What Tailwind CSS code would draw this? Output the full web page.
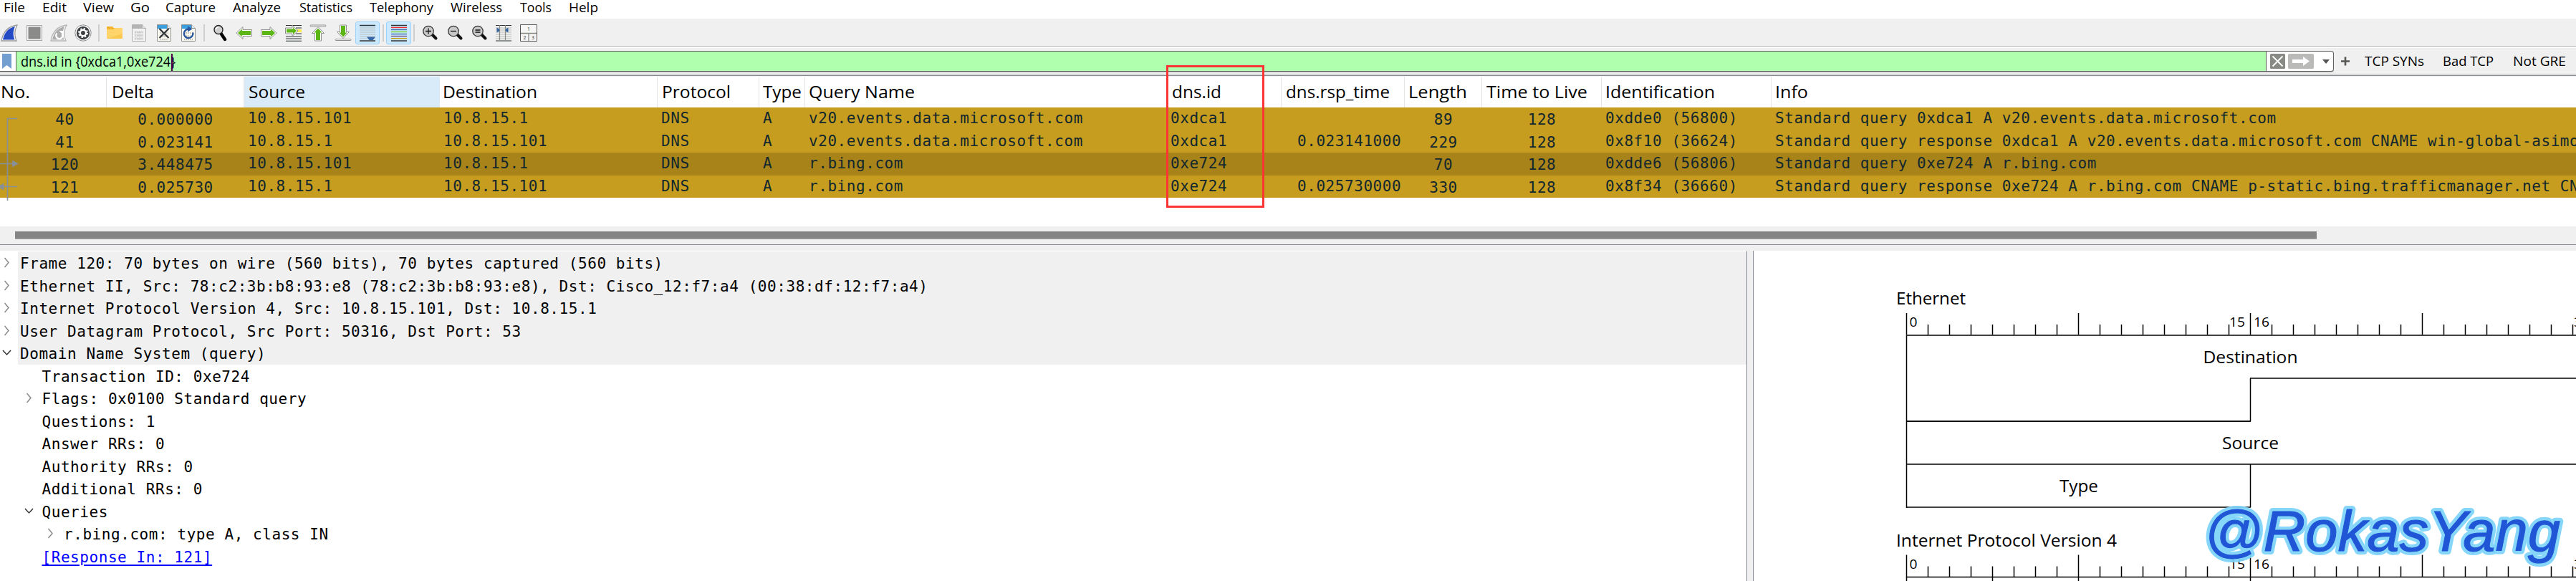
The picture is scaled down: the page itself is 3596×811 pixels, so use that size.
<!doctype html>
<html lang="en">
<head>
    <meta charset="UTF-8">
    <meta name="viewport" content="width=device-width, initial-scale=1.0">
    <script src="https://cdn.jsdelivr.net/npm/@tailwindcss/browser@4"></script>
    <title>dns.id in {0xdca1,0xe724}</title>
</head>
<body class="w-[3596px] h-[811px] overflow-hidden bg-[#f0f0f0] text-black font-['Open_Sans','Noto_Sans',sans-serif]">

<div class="relative flex flex-col w-[3596px] h-[811px] overflow-hidden">

    <!-- menu bar -->
    <nav id="menu" class="h-[26px] shrink-0 flex bg-white pl-[5px]"></nav>

    <!-- toolbar -->
    <div class="h-[39px] shrink-0 flex items-center border-t-2 border-[#f0f0f0] border-b border-b-[#b4b4b4] -ml-1">
        <div class="w-[34.4px] shrink-0 flex justify-center">
            <svg class="size-6" viewBox="0 0 24 24"><path d="M1 23C3 11 9 3 23 1C19 8 19 16 22 23Z" fill="#fff" stroke="#9a9a9a" stroke-width="1.3"/><path d="M3 21.500C5 12 10 5 20 3C17 9 17 16 19.500 21.500Z" fill="#2449c4"/></svg>
        </div>
        <div class="w-[34.4px] shrink-0 flex justify-center">
            <svg class="size-6" viewBox="0 0 24 24"><rect x="1.500" y="1.500" width="21" height="21" fill="#f4f4f4" stroke="#a8a8a8"/><rect x="3.500" y="3.500" width="17" height="17" fill="#8b8b89"/></svg>
        </div>
        <div class="w-[34.4px] shrink-0 flex justify-center">
            <svg class="size-6" viewBox="0 0 24 24"><path d="M1 23C3 11 9 3 23 1C19 8 19 16 22 23Z" fill="#fff" stroke="#b4b4b4" stroke-width="1.3"/><path d="M3 21.500C5 12 10 5 20 3C17 9 17 16 19.500 21.500Z" fill="#adadad"/><path d="M9.500 12.500a4.500 4.500 0 1 0 7 .500" fill="none" stroke="#fff" stroke-width="2.400"/><path d="M12.500 9h6v6z" fill="#fff"/></svg>
        </div>
        <div class="w-[34.4px] shrink-0 flex justify-center">
            <svg class="size-6" viewBox="0 0 24 24"><circle cx="12" cy="12" r="11.200" fill="#fff" stroke="#8c8c8c"/><circle cx="12" cy="12" r="9.200" fill="#3e4143"/><circle cx="12" cy="12" r="4.200" fill="none" stroke="#fff" stroke-width="2.400"/><circle cx="12" cy="12" r="6" fill="none" stroke="#fff" stroke-width="2" stroke-dasharray="2.200 2.512"/></svg>
        </div>
        <div class="w-[9.2px] shrink-0 flex justify-center"><i class="w-[2px] h-6 bg-[#cfcfcf]"></i></div>
        <div class="w-[34.4px] shrink-0 flex justify-center">
            <svg class="size-6" viewBox="0 0 24 24"><path d="M1 3h8l2 2h12v15H1z" fill="#f2b42c"/><path d="M1 7h9l2-2h11v15H1z" fill="#ffd46b"/><path d="M1 20h22v-7z" fill="#fbc94f"/></svg>
        </div>
        <div class="w-[34.4px] shrink-0 flex justify-center">
            <svg class="size-6" viewBox="0 0 24 24"><path d="M2.500.500h14l5 5v18h-19z" fill="#f3f3f3" stroke="#b0b0b0"/><path d="M3 1h13v5H3z" fill="#b4b4b4"/><path d="M16.500.500v5h5" fill="#e4e4e4" stroke="#b0b0b0"/><path d="M6 11h12M6 15.500h12M6 20h12" stroke="#bcbcbc" stroke-width="2.800" stroke-dasharray="1.500 1.200"/></svg>
        </div>
        <div class="w-[34.4px] shrink-0 flex justify-center">
            <svg class="size-6" viewBox="0 0 24 24"><path d="M2.500.500h14l5 5v18h-19z" fill="#fbfbf2" stroke="#909090"/><path d="M3 1h13v5H3z" fill="#3a9fdf"/><path d="M16.500.500v5h5" fill="#dcecf5" stroke="#909090"/><path d="M6 12h12M6 16.500h12M6 21h12" stroke="#c0c0b8" stroke-width="2.500" stroke-dasharray="1.500 1.200"/><path d="M5.500 6L18.500 19M18.500 6L5.500 19" stroke="#2e3436" stroke-width="2.200"/></svg>
        </div>
        <div class="w-[34.4px] shrink-0 flex justify-center">
            <svg class="size-6" viewBox="0 0 24 24"><path d="M2.500.500h14l5 5v18h-19z" fill="#fbfbf2" stroke="#909090"/><path d="M3 1h13v5H3z" fill="#3a9fdf"/><path d="M16.500.500v5h5" fill="#dcecf5" stroke="#909090"/><path d="M6 12h12M6 16.500h12M6 21h12" stroke="#c0c0b8" stroke-width="2.500" stroke-dasharray="1.500 1.200"/><path d="M18.300 11.500a6.300 6.300 0 1 1-6.300-5" fill="none" stroke="#2a56a0" stroke-width="2.400"/><path d="M11 2.500l6.500 4l-6.500 4z" fill="#2a56a0"/></svg>
        </div>
        <div class="w-[9.2px] shrink-0 flex justify-center"><i class="w-[2px] h-6 bg-[#cfcfcf]"></i></div>
        <div class="w-[34.4px] shrink-0 flex justify-center">
            <svg class="size-6" viewBox="0 0 24 24"><path d="M13 12l6 9" stroke="#000" stroke-width="4.400" stroke-linecap="round"/><circle cx="10" cy="7.500" r="6" fill="#cfcfcf" stroke="#222" stroke-width="1.400"/><path d="M6.500 7a3.500 3.500 0 0 1 3.500-3" stroke="#fff" stroke-width="1.500" fill="none"/></svg>
        </div>
        <div class="w-[34.4px] shrink-0 flex justify-center">
            <svg class="size-6" viewBox="0 0 24 24"><path d="M1 12L10 3.500V7.500H22.500V16.500H10V20.500Z" fill="#fff" stroke="#909090"/><path d="M3 12L8.800 6.500V9H21V15H8.800V17.500Z" fill="#5cb615"/></svg>
        </div>
        <div class="w-[34.4px] shrink-0 flex justify-center">
            <svg class="size-6" viewBox="0 0 24 24"><path d="M23 12L14 3.500V7.500H1.500V16.500H14V20.500Z" fill="#fff" stroke="#909090"/><path d="M21 12L15.200 6.500V9H3V15H15.200V17.500Z" fill="#5cb615"/></svg>
        </div>
        <div class="w-[34.4px] shrink-0 flex justify-center">
            <svg class="size-6" viewBox="0 0 24 24"><path d="M1 1.500h22M1 17h22M1 20h22M1 23.300h22M15 5h8M15 13h8" stroke="#2e3436" stroke-width="1.100"/><path d="M14 7h9v4h-9z" fill="#fce94f"/><path d="M18 9L10 1V5H.500V13H10V16.500Z" fill="#fff" stroke="#909090"/><path d="M16 9L11 4V6.500H2V11.500H11V14Z" fill="#5cb615"/></svg>
        </div>
        <div class="w-[34.4px] shrink-0 flex justify-center">
            <svg class="size-6" viewBox="0 0 24 24"><rect x="1" y="1" width="22" height="2" rx="1" fill="#fff" stroke="#909090"/><path d="M12 3.500L20.500 12.500H16.500V23H7.500V12.500H3.500Z" fill="#fff" stroke="#909090"/><path d="M12 5.500L17.500 11.500H15V22H9V11.500H6.500Z" fill="#5cb615"/></svg>
        </div>
        <div class="w-[34.4px] shrink-0 flex justify-center">
            <svg class="size-6" viewBox="0 0 24 24"><rect x="1" y="20.500" width="22" height="2" rx="1" fill="#fff" stroke="#909090"/><path d="M12 19.500L20.500 10.500H16.500V1H7.500V10.500H3.500Z" fill="#fff" stroke="#909090"/><path d="M12 17.500L17.500 11.500H15V2H9V11.500H6.500Z" fill="#5cb615"/></svg>
        </div>
        <div class="w-[34.4px] h-8 shrink-0 flex items-center justify-center bg-[#cce8ff] border border-[#99d1ff] rounded-[3px]">
            <svg class="size-6" viewBox="0 0 24 24"><path d="M1 1.500h22M1 23h22" stroke="#2e3436" stroke-width="1.300"/><path d="M1 5h22M1 8h22M1 11h22M1 14h22M1 17h22M1 20h22" stroke="#babdb6"/><path d="M11 17.500h12L19.500 22h-5z" fill="#3465a4"/></svg>
        </div>
        <div class="w-[9.2px] shrink-0 flex justify-center"><i class="w-[2px] h-6 bg-[#cfcfcf]"></i></div>
        <div class="w-[34.4px] h-8 shrink-0 flex items-center justify-center bg-[#cce8ff] border border-[#99d1ff] rounded-[3px]">
            <svg class="size-6" viewBox="0 0 24 24" stroke-width="1.300"><path d="M1 1.500h22M1 23h22" stroke="#2e3436"/><path d="M1 4.500h22" stroke="#ef2929"/><path d="M1 7.500h22" stroke="#3465a4"/><path d="M1 10.500h22" stroke="#73d216"/><path d="M1 13.500h22" stroke="#3465a4"/><path d="M1 16.500h22" stroke="#75507b"/><path d="M1 19.700h22" stroke="#c4a000"/></svg>
        </div>
        <div class="w-[9.2px] shrink-0 flex justify-center"><i class="w-[2px] h-6 bg-[#cfcfcf]"></i></div>
        <div class="w-[34.4px] shrink-0 flex justify-center">
            <svg class="size-6" viewBox="0 0 24 24"><path d="M15.500 14.500l5 5" stroke="#111" stroke-width="4" stroke-linecap="round"/><circle cx="10" cy="9.500" r="7.200" fill="#c9c9c9" stroke="#333" stroke-width="1.300"/><path d="M6 9.500h8M10 5.500v8" stroke="#111" stroke-width="1.300"/></svg>
        </div>
        <div class="w-[34.4px] shrink-0 flex justify-center">
            <svg class="size-6" viewBox="0 0 24 24"><path d="M15.500 14.500l5 5" stroke="#111" stroke-width="4" stroke-linecap="round"/><circle cx="10" cy="9.500" r="7.200" fill="#c9c9c9" stroke="#333" stroke-width="1.300"/><path d="M6 9.500h8" stroke="#111" stroke-width="1.300"/></svg>
        </div>
        <div class="w-[34.4px] shrink-0 flex justify-center">
            <svg class="size-6" viewBox="0 0 24 24"><path d="M15.500 14.500l5 5" stroke="#111" stroke-width="4" stroke-linecap="round"/><circle cx="10" cy="9.500" r="7.200" fill="#c9c9c9" stroke="#333" stroke-width="1.300"/><path d="M6.500 8h7M6.500 11h7" stroke="#111" stroke-width="1.300"/></svg>
        </div>
        <div class="w-[34.4px] shrink-0 flex justify-center">
            <svg class="size-6" viewBox="0 0 24 24"><path d="M1 5h22M1 8h22M1 11h22M1 14h22M1 17h22M1 20h22" stroke="#babdb6"/><path d="M1 1.500h22M1 23h22" stroke="#2e3436" stroke-width="1.200"/><path d="M6.500 1v22M14.500 1v22" stroke="#888a85" stroke-width="1.200"/><path d="M2.500 4.500L6 6.500v3l-3.500 2zM18.500 4.500L15 6.500v3l3.500 2z" fill="#3465a4"/></svg>
        </div>
        <div class="w-[34.4px] shrink-0 flex justify-center">
            <svg class="size-6" viewBox="0 0 24 24"><path d="M.500.500h23v23H.500z" fill="#f6f6f6" stroke="#555753"/><path d="M1 12.500h22M12 12.500V23" stroke="#888a85" stroke-width="1.300"/><g font-size="7" fill="#333" text-anchor="middle"><text x="12" y="9">1</text><text x="6.500" y="20.500">2</text><text x="18" y="20.500">3</text></g></svg>
        </div>
    </div>

    <!-- display filter -->
    <div class="h-[42px] shrink-0 flex items-start border-t-2 border-white pt-1 border-b border-b-[#f0f0f0]">
        <div class="w-[3258px] h-[29px] flex bg-white border border-l-0 border-[#5f6360] rounded-r-[4px] shadow-[0_1px_0_#b9b0b9]">
            <div class="w-[23px] shrink-0 pl-[3px] pt-[3px] border-r border-[#5f6360]">
                <svg class="w-[13px] h-[21px]" viewBox="0 0 13 21"><path d="M0 0h13v21l-6.500-5L0 21z" fill="#729fcf"/></svg>
            </div>
            <div class="relative w-[3141px] shrink-0 bg-[#afffaf] border-r border-[#5f6360] pl-1.5">
                <svg class="w-[220px] h-[27px]" width="220" height="27" font-size="19.500"><text x="0" y="21" textLength="216" lengthAdjust="spacingAndGlyphs">dns.id in {0xdca1,0xe724}</text></svg>
                <i class="absolute left-[216px] top-[3px] w-[2px] h-6 bg-[#4f004f]"></i>
            </div>
            <div class="flex items-center gap-1 pl-[5px]">
                <svg class="w-[21px] h-[21px]" viewBox="0 0 21 21"><rect width="21" height="21" rx="1.500" fill="#888a85"/><path d="M3.500 3.500l14 14M17.500 3.500l-14 14" stroke="#fff" stroke-width="1.800"/></svg>
                <svg class="w-9 h-[21px]" viewBox="0 0 36 21"><rect width="36" height="21" rx="2" fill="#babbb9"/><path d="M6 8h15V4l9 6.500-9 6.500v-4H6z" fill="#fff"/></svg>
                <svg class="w-[10px] h-[6px] ml-2" viewBox="0 0 10 6"><path d="M0 0h10L5 6z" fill="#555"/></svg>
            </div>
        </div>
        <div class="flex items-center h-[29px] pl-[10px]">
            <svg class="w-3 h-[13px] mr-[21px]" viewBox="0 0 12 13"><path d="M6 .500v12M0 6.500h12" stroke="#555753" stroke-width="2.600"/></svg>
            <svg class="w-[109px] h-[29px]" width="109" height="29" font-size="19"><text x="0" y="21" textLength="83" lengthAdjust="spacingAndGlyphs">TCP SYNs</text></svg>
            <svg class="w-[98px] h-[29px]" width="98" height="29" font-size="19"><text x="0" y="21" textLength="71" lengthAdjust="spacingAndGlyphs">Bad TCP</text></svg>
            <svg class="w-[80px] h-[29px]" width="80" height="29" font-size="19"><text x="0" y="21" textLength="74" lengthAdjust="spacingAndGlyphs">Not GRE</text></svg>
        </div>
    </div>

    <!-- packet list -->
    <section class="relative h-[209px] shrink-0 bg-white">
        <div class="absolute -top-[4px] left-0 w-full h-[2px] border-t border-[#c3c3c3]"></div>
        <div class="absolute -top-[2px] left-0 w-full h-[2px] border-t border-[#828790]"></div>
        <div id="head" class="h-[43px] grid grid-cols-[149px_192px_273px_304px_142px_64px_505px_160px_172px_108px_167px_237px_1fr]"></div>
        <div id="packets" class="text-[#12272e] font-['DejaVu_Sans_Mono',monospace] text-[21px] tracking-[0.56px] leading-[31.5px]"></div>
        <!-- conversation arrows of the selected packet -->
        <svg class="absolute left-0 top-[43px] w-[30px] h-[131px]" viewBox="0 0 30 131" fill="none" stroke="#888f96" stroke-width="1.600">
            <path d="M24.500 15.500H10.500V130M0 78.500H18M5 110.500H24.500"/>
            <path d="M17 73.500l9 5l-9 5zM5.500 105.500l-9 5l9 5z" fill="#888f96" stroke="none"/>
        </svg>
    </section>

    <!-- horizontal scroll bar -->
    <div class="h-[34px] shrink-0 pt-[7px] pl-[21px]">
        <div class="w-[3213px] h-[11px] bg-[#858585] border-b border-[#a8a8a8]"></div>
        <div class="-ml-[21px] mt-[7px] h-px bg-[#828790]"></div>
    </div>

    <div class="flex grow min-h-0">
        <!-- packet details -->
        <section id="details" class="w-[2439px] shrink-0 bg-white border-t border-white border-r border-r-[#828790] font-['DejaVu_Sans_Mono',monospace] text-[21px] tracking-[0.56px] leading-[31.5px]"></section>
        <div class="w-2 shrink-0"></div>
        <!-- packet diagram -->
        <section class="w-[1149px] h-[461px] shrink-0 bg-white border-l border-[#828790]">
            <svg id="diagram" class="w-[1148px] h-[461px]" viewBox="2448 350 1148 461" font-size="24" stroke-width="1.500"></svg>
        </section>
    </div>

    <div class="absolute left-[1628px] top-[91px] w-[137px] h-[199px] border-3 border-[#fd3434]"></div>
    <svg class="absolute left-[3060px] top-[690px] w-[536px] h-[121px]" viewBox="3060 690 536 121" font-family="Liberation Sans, sans-serif" font-size="80.500" font-style="italic" stroke-linejoin="round">
        <text x="3077" y="769" textLength="497" lengthAdjust="spacingAndGlyphs" fill="none" stroke="#7dd3f9" stroke-opacity=".93" stroke-width="10">@RokasYang</text>
        <text x="3077" y="769" textLength="497" lengthAdjust="spacingAndGlyphs" fill="#2056d6" stroke="#2056d6" stroke-width="1">@RokasYang</text>
    </svg>
</div>

<script>
    // a label condensed to a given width
    function label(text, w, h, y, size) {
        return `<svg class="block shrink-0" width="${w}" height="${h}" font-size="${size}"><text x="0" y="${y}" textLength="${w}" lengthAdjust="spacingAndGlyphs">${text}</text></svg>`;
    }

    // label, left edge, width
    const menu = [
        ["File", 5, 30], ["Edit", 59, 34], ["View", 116, 43], ["Go", 182, 27], ["Capture", 231, 70],
        ["Analyze", 325, 67], ["Statistics", 418, 74], ["Telephony", 516, 89], ["Wireless", 629, 72],
        ["Tools", 726, 44], ["Help", 794, 41],
    ];
    document.querySelector("#menu").innerHTML = menu.map(([text, x, w], i) => `
        <div class="shrink-0" style="width:${(menu[i + 1] ? menu[i + 1][1] : 900) - x}px">${label(text, w, 26, 17, 18.8)}</div>
    `).join("");

    const columns = [
        ["No.", 1, 41], ["Delta", 7, 59], ["Source", 6, 79], ["Destination", 4, 132], ["Protocol", 6, 96],
        ["Type", 5, 54], ["Query Name", 5, 148], ["dns.id", 7, 69], ["dns.rsp_time", 6, 145],
        ["Length", 5, 82], ["Time to Live", 6, 141], ["Identification", 5, 153], ["Info", 5, 46],
    ];
    document.querySelector("#head").innerHTML = columns.map(([text, pad, w], i) => `
        <div class="overflow-hidden ${i == 2 ? "bg-[#d9ebf9] border-r border-[#d9ebf9]" : i == 12 ? "" : "border-r border-[#e5e5e5]"}" style="padding-left:${pad}px">${label(text, w, 43, 29.5, 23.5)}</div>
    `).join("");

    const packets = [
        ["40", "0.000000", "10.8.15.101", "10.8.15.1", "DNS", "A", "v20.events.data.microsoft.com", "0xdca1", "", "89", "128", "0xdde0 (56800)", "Standard query 0xdca1 A v20.events.data.microsoft.com"],
        ["41", "0.023141", "10.8.15.1", "10.8.15.101", "DNS", "A", "v20.events.data.microsoft.com", "0xdca1", "0.023141000", "229", "128", "0x8f10 (36624)", "Standard query response 0xdca1 A v20.events.data.microsoft.com CNAME win-global-asimov"],
        ["120", "3.448475", "10.8.15.101", "10.8.15.1", "DNS", "A", "r.bing.com", "0xe724", "", "70", "128", "0xdde6 (56806)", "Standard query 0xe724 A r.bing.com"],
        ["121", "0.025730", "10.8.15.1", "10.8.15.101", "DNS", "A", "r.bing.com", "0xe724", "0.025730000", "330", "128", "0x8f34 (36660)", "Standard query response 0xe724 A r.bing.com CNAME p-static.bing.trafficmanager.net CNAME"],
    ];
    const centered = [0, 1, 9, 10];
    document.querySelector("#packets").innerHTML = packets.map((packet, n) => `
        <div class="h-[31.5px] grid grid-cols-[149px_192px_273px_304px_142px_64px_505px_160px_172px_108px_167px_237px_1fr] ${n == 2 ? "bg-[#a88319]" : "bg-[#c69d1e]"}">
            ${packet.map((text, i) => `<div class="h-[31.5px] whitespace-pre overflow-hidden ${i == 0 ? "pl-8" : ""} ${centered.includes(i) ? "text-center pt-0.5" : i == 8 ? "pl-[22px]" : "pl-[5px]"}">${text}</div>`).join("")}
        </div>
    `).join("");

    // depth, state, text
    const tree = [
        [0, "closed", "Frame 120: 70 bytes on wire (560 bits), 70 bytes captured (560 bits)"],
        [0, "closed", "Ethernet II, Src: 78:c2:3b:b8:93:e8 (78:c2:3b:b8:93:e8), Dst: Cisco_12:f7:a4 (00:38:df:12:f7:a4)"],
        [0, "closed", "Internet Protocol Version 4, Src: 10.8.15.101, Dst: 10.8.15.1"],
        [0, "closed", "User Datagram Protocol, Src Port: 50316, Dst Port: 53"],
        [0, "open", "Domain Name System (query)"],
        [1, "", "Transaction ID: 0xe724"],
        [1, "closed", "Flags: 0x0100 Standard query"],
        [1, "", "Questions: 1"],
        [1, "", "Answer RRs: 0"],
        [1, "", "Authority RRs: 0"],
        [1, "", "Additional RRs: 0"],
        [1, "open", "Queries"],
        [2, "closed", "r.bing.com: type A, class IN"],
        [1, "link", "[Response In: 121]"],
    ];
    const chevrons = {
        closed: `<path d="M6.500 9l5.500 6.500l-5.500 6.500" stroke="#8a8a8a"/>`,
        open: `<path d="M4 12l5.500 6l5.500-6" stroke="#333"/>`,
    };
    document.querySelector("#details").innerHTML = tree.map(([depth, state, text]) => `
        <div class="h-[31.5px] flex" style="padding-left:${depth * 30.5}px">
            <svg class="w-[25px] h-[25px] shrink-0" viewBox="0 0 25 25" fill="none" stroke-width="1.500">${chevrons[state] || ""}</svg>
            <div class="grow whitespace-pre pl-[3px] pt-0.5 ${depth == 0 ? "bg-[#f0f0f0]" : ""}"><span class="${state == "link" ? "text-[#0000ff] underline decoration-2 underline-offset-3" : ""}">${text}</span></div>
        </div>
    `).join("");

    // one header of the diagram: title and a ruler of 32 bits
    const left = 2661.5, bit = 30;
    function ruler(title, w, y) {
        let out = `<text x="2647" y="${y - 43}" textLength="${w}" lengthAdjust="spacingAndGlyphs">${title}</text>`;
        for (let i = 0; i < 32; i++) {
            const x = left + i * bit;
            out += `<path d="M${x} ${y - (i % 8 ? 15 : 31)}V${y}" stroke="#000"/>`;
        }
        out += `<g font-size="18.500">
            <text x="2665.500" y="${y - 12}" textLength="11" lengthAdjust="spacingAndGlyphs">0</text>
            <text x="3112" y="${y - 12}" textLength="22" lengthAdjust="spacingAndGlyphs">15</text>
            <text x="3146" y="${y - 12}" textLength="22" lengthAdjust="spacingAndGlyphs">16</text>
            <text x="3593" y="${y - 12}" textLength="22" lengthAdjust="spacingAndGlyphs">31</text>
        </g>`;
        return out;
    }
    document.querySelector("#diagram").innerHTML = `
        ${ruler("Ethernet", 97, 468)}
        ${ruler("Internet Protocol Version 4", 308, 805.5)}
        <path d="M2661 468H3596M3141 528H3596M2661 648H3596M2661 708H3142" stroke="#404040" stroke-width="2"/>
        <path d="M2661 588H3142" stroke="#111" stroke-width="2"/>
        <path d="M2661.500 468V709M3141.500 528V588M3141.500 648V708M2661 805.500H3596M2661.500 805V811M2781.500 805V811M2901.500 805V811M3141.500 805V811" fill="none" stroke="#000"/>
        <text x="3075.500" y="507" textLength="132" lengthAdjust="spacingAndGlyphs">Destination</text>
        <text x="3102" y="627" textLength="79" lengthAdjust="spacingAndGlyphs">Source</text>
        <text x="2875" y="687" textLength="54" lengthAdjust="spacingAndGlyphs">Type</text>
    `;
</script>
</body>
</html>
